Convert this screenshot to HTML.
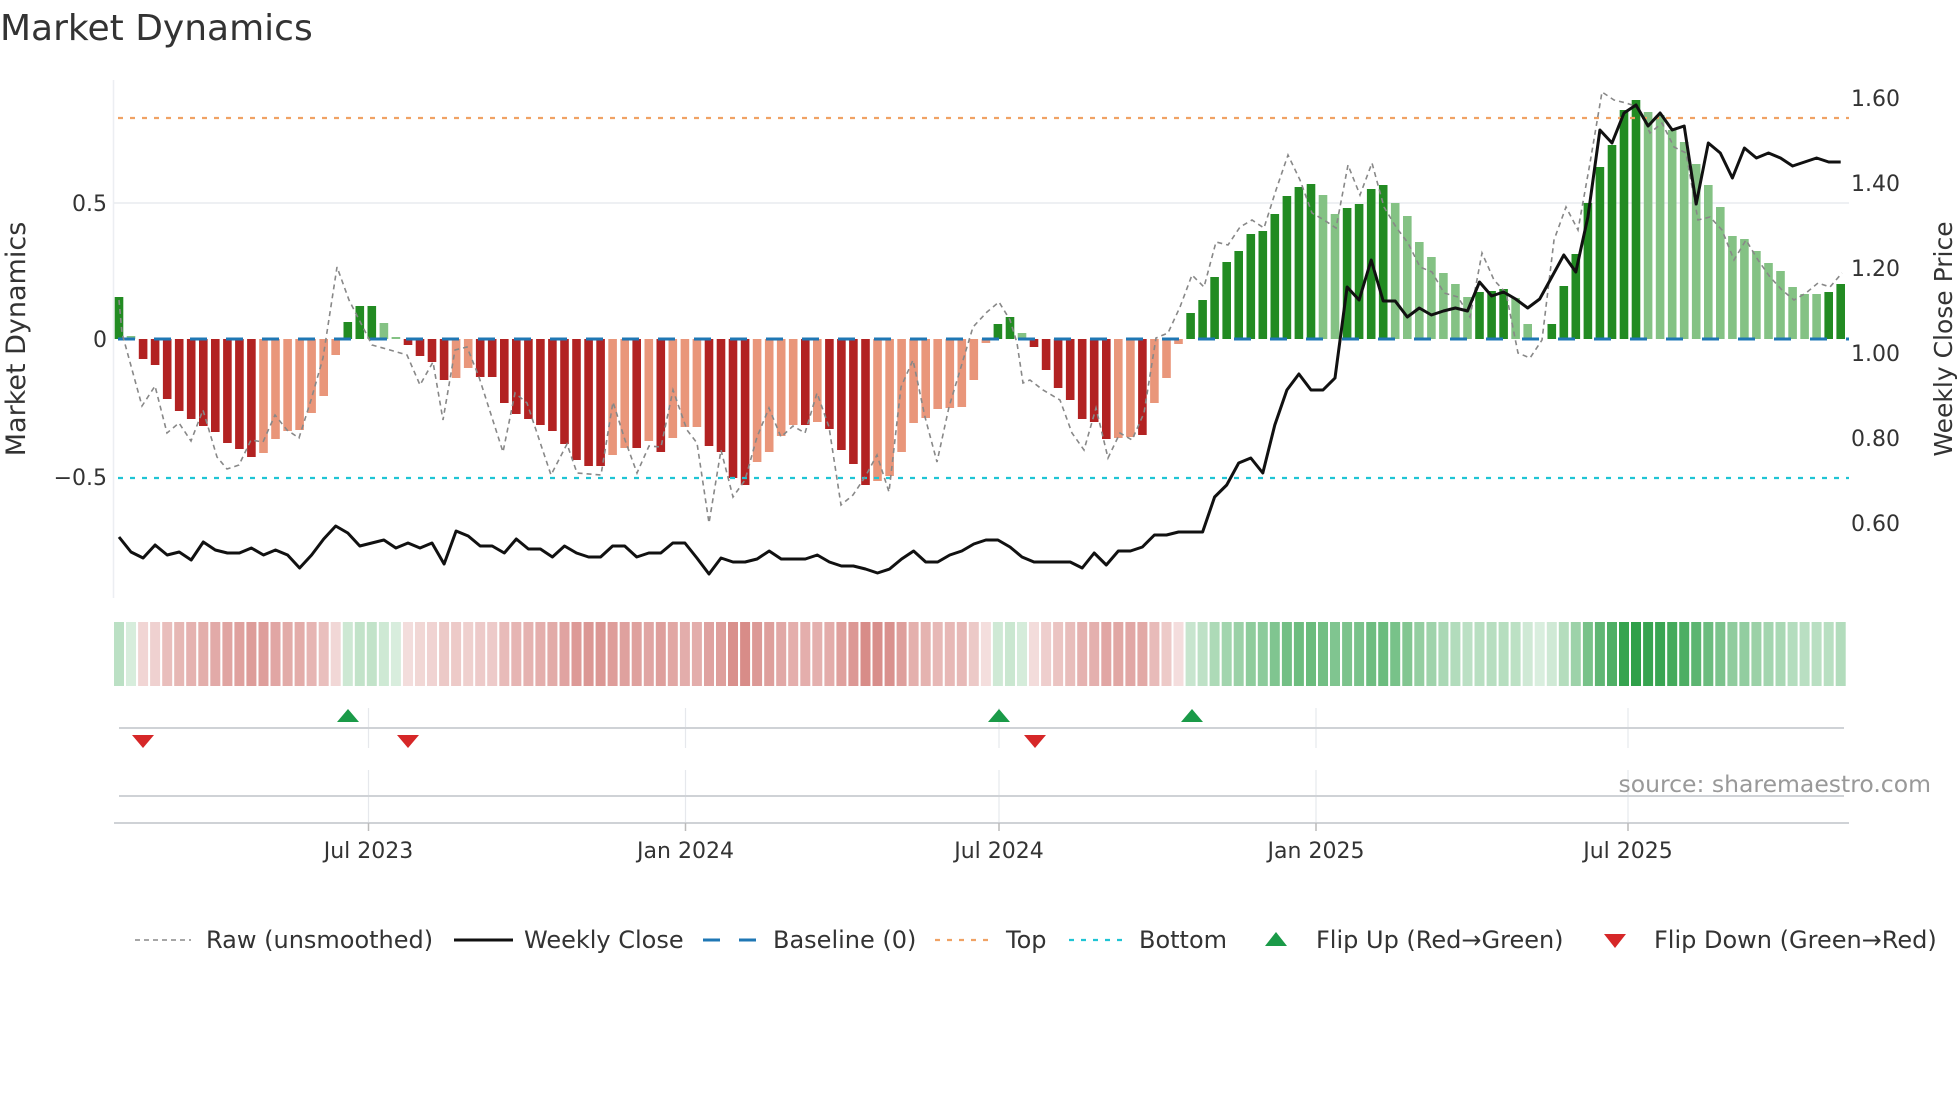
<!DOCTYPE html>
<html><head><meta charset="utf-8"><style>
html,body{margin:0;padding:0;background:#fff;}
svg{display:block;font-family:"DejaVu Sans","Liberation Sans",sans-serif;}
</style></head><body>
<svg id="s" width="1960" height="1102" viewBox="0 0 1960 1102" xmlns="http://www.w3.org/2000/svg">
<rect width="1960" height="1102" fill="#fff"/>
<text x="0" y="40" font-size="36" fill="#333">Market Dynamics</text>
<line x1="113.5" y1="80" x2="113.5" y2="598" stroke="#eceef2" stroke-width="1.5"/>
<line x1="114" y1="203" x2="1849" y2="203" stroke="#e8ebef" stroke-width="1.5"/>
<g id="bars"></g>
<line x1="118" y1="339" x2="1849" y2="339" stroke="#1f77b4" stroke-width="3" stroke-dasharray="17 19"/>
<line x1="118" y1="118" x2="1849" y2="118" stroke="#f0a264" stroke-width="2.2" stroke-dasharray="5 7"/>
<line x1="118" y1="478" x2="1849" y2="478" stroke="#1fc4d4" stroke-width="2.2" stroke-dasharray="5 7"/>
<polyline id="raw" fill="none" stroke="#888" stroke-width="1.6" stroke-dasharray="5 4"/>
<polyline id="close" fill="none" stroke="#111" stroke-width="3" stroke-linejoin="round"/>
<g font-size="22" fill="#333">
<text x="107" y="211" text-anchor="end">0.5</text>
<text x="107" y="347" text-anchor="end">0</text>
<text x="107" y="485" text-anchor="end">−0.5</text>
<text x="1851" y="106">1.60</text>
<text x="1851" y="191">1.40</text>
<text x="1851" y="276">1.20</text>
<text x="1851" y="361">1.00</text>
<text x="1851" y="446">0.80</text>
<text x="1851" y="531">0.60</text>
</g>
<text transform="translate(25,339) rotate(-90)" text-anchor="middle" font-size="27" fill="#333">Market Dynamics</text>
<text transform="translate(1952,339) rotate(-90)" text-anchor="middle" font-size="25" fill="#333">Weekly Close Price</text>
<g id="heat"></g>
<g stroke="#e6e8ec" stroke-width="1.2">
<line x1="368.5" y1="708" x2="368.5" y2="748"/><line x1="685.5" y1="708" x2="685.5" y2="748"/><line x1="999" y1="708" x2="999" y2="748"/><line x1="1316" y1="708" x2="1316" y2="748"/><line x1="1628" y1="708" x2="1628" y2="748"/>
<line x1="368.5" y1="770" x2="368.5" y2="823"/><line x1="685.5" y1="770" x2="685.5" y2="823"/><line x1="999" y1="770" x2="999" y2="823"/><line x1="1316" y1="770" x2="1316" y2="823"/><line x1="1628" y1="770" x2="1628" y2="823"/>
</g>
<g stroke="#cfd2d6" stroke-width="2">
<line x1="119" y1="728" x2="1844" y2="728"/>
<line x1="119" y1="796" x2="1844" y2="796"/>
<line x1="114" y1="823" x2="1849" y2="823"/>
</g>
<g stroke="#bbb" stroke-width="1.5">
<line x1="368.5" y1="823" x2="368.5" y2="831"/><line x1="685.5" y1="823" x2="685.5" y2="831"/><line x1="999" y1="823" x2="999" y2="831"/><line x1="1316" y1="823" x2="1316" y2="831"/><line x1="1628" y1="823" x2="1628" y2="831"/>
</g>
<g fill="#1a9a48">
<polygon points="337,722 359,722 348,709"/>
<polygon points="988,722 1010,722 999,709"/>
<polygon points="1181,722 1203,722 1192,709"/>
</g>
<g fill="#d62728">
<polygon points="132,735 154,735 143,748"/>
<polygon points="397,735 419,735 408,748"/>
<polygon points="1024,735 1046,735 1035,748"/>
</g>
<g font-size="22" fill="#333" text-anchor="middle">
<text x="368.5" y="858">Jul 2023</text>
<text x="685.5" y="858">Jan 2024</text>
<text x="999" y="858">Jul 2024</text>
<text x="1316" y="858">Jan 2025</text>
<text x="1628" y="858">Jul 2025</text>
</g>
<text x="1931" y="792" text-anchor="end" font-size="23.5" fill="#999">source: sharemaestro.com</text>
<g font-size="24" fill="#333">
<line x1="135" y1="940" x2="191" y2="940" stroke="#888" stroke-width="1.6" stroke-dasharray="5 4"/>
<text x="206" y="948">Raw (unsmoothed)</text>
<line x1="454" y1="940" x2="513" y2="940" stroke="#111" stroke-width="3"/>
<text x="524" y="948">Weekly Close</text>
<line x1="703" y1="940" x2="758" y2="940" stroke="#1f77b4" stroke-width="3" stroke-dasharray="17 19"/>
<text x="773" y="948">Baseline (0)</text>
<line x1="935" y1="940" x2="990" y2="940" stroke="#f0a264" stroke-width="2.2" stroke-dasharray="5 7"/>
<text x="1006" y="948">Top</text>
<line x1="1069" y1="940" x2="1124" y2="940" stroke="#1fc4d4" stroke-width="2.2" stroke-dasharray="5 7"/>
<text x="1139" y="948">Bottom</text>
<polygon points="1265,946 1287,946 1276,932" fill="#1a9a48"/>
<text x="1316" y="948">Flip Up (Red→Green)</text>
<polygon points="1604,934 1626,934 1615,948" fill="#d62728"/>
<text x="1654" y="948">Flip Down (Green→Red)</text>
</g>
</svg>
<script>
var H=[42,3,-20,-26,-60,-72,-80,-87,-93,-104,-110,-118,-114,-100,-92,-91,-74,-57,-16,17,33,33,16,2,-6,-17,-23,-41,-39,-29,-38,-38,-64,-75,-80,-86,-92,-105,-121,-127,-127,-116,-109,-109,-102,-113,-99,-88,-88,-107,-113,-139,-146,-123,-113,-97,-86,-86,-83,-90,-111,-125,-146,-142,-137,-113,-84,-79,-70,-69,-68,-41,-4,15,22,6,-8,-31,-49,-61,-80,-83,-100,-99,-98,-96,-64,-39,-5,26,39,62,77,88,105,108,125,143,152,155,144,125,131,135,150,154,136,123,97,82,66,55,42,47,48,50,41,15,0,15,53,85,136,172,194,229,239,227,224,209,197,175,154,132,103,100,88,76,68,52,45,45,47,55];
var light=function(i){var L=[1,12,13,14,15,16,17,18,22,23,28,29,41,42,44,46,47,48,53,54,55,56,58,63,64,65,66,67,68,69,70,71,72,75,83,84,86,87,88,100,101,106,107,108,109,110,111,112,116,117];if(L.indexOf(i)>=0)return true;if(i>=127&&i<=141)return true;return false;};
var C=[537,552,558,545,555,552,560,542,550,553,553,548,555,550,555,568,555,539,526,533,546,543,540,548,543,548,543,564,531,536,546,546,553,539,549,549,557,546,553,557,557,546,546,557,553,553,543,543,558,574,558,562,562,559,551,559,559,559,555,562,566,566,569,573,569,559,551,562,562,555,551,544,540,540,547,557,562,562,562,562,568,553,565,551,551,547,535,535,532,532,532,497,485,463,458,473,425,390,374,390,390,378,287,300,260,301,301,317,308,315,311,308,311,282,296,292,299,308,299,277,255,272,217,130,143,113,105,126,113,130,126,204,143,153,178,148,158,153,158,166,162,158,162,162];
var R=[119,300,122,333,142,406,155,386,167,433,179,423,191,441,203,410,217,457,227,469,239,465,251,440,263,442,275,415,287,430,299,438,311,400,323,358,337,267,349,300,372,345,390,350,407,355,420,385,433,362,443,420,455,350,467,347,479,377,503,452,515,393,527,403,551,475,567,444,577,473,601,475,613,402,625,440,637,473,649,446,661,447,673,390,687,430,697,443,709,523,721,450,733,497,745,480,757,437,769,408,781,437,793,426,805,433,817,393,829,427,841,505,853,495,865,477,877,455,889,492,901,387,913,360,925,417,937,462,949,407,961,367,973,327,987,312,999,302,1010,320,1017,343,1023,383,1030,380,1043,390,1060,400,1072,433,1084,450,1096,408,1108,458,1120,433,1132,440,1144,413,1156,338,1168,333,1180,307,1192,275,1204,287,1216,242,1228,245,1240,227,1252,220,1264,228,1276,190,1288,155,1300,180,1312,213,1324,220,1336,228,1348,165,1360,195,1372,163,1384,207,1396,227,1408,243,1420,267,1432,272,1444,293,1458,297,1470,317,1482,253,1494,280,1506,293,1518,353,1530,358,1542,340,1554,240,1566,207,1578,230,1590,163,1602,92,1614,100,1626,103,1638,107,1650,133,1662,123,1674,147,1686,153,1698,220,1710,217,1722,230,1734,260,1746,240,1758,260,1770,277,1782,290,1794,300,1806,293,1818,283,1830,287,1842,273];
var b="",h="",pts=[],rp=[];
function mix(c,t){return "rgb("+c.map(function(v){return Math.round(255-(255-v)*t)}).join(",")+")";}
for(var i=0;i<144;i++){var x=119+i*12.04,v=H[i],lt=light(i),col;
 if(v>=0)col=lt?"#84c284":"#228b22";else col=lt?"#e9967a":"#b22222";
 if(v!==0){var y=v>0?339-v:339,hh=Math.abs(v);b+='<rect x="'+(x-4.3).toFixed(1)+'" y="'+y+'" width="8.6" height="'+hh+'" fill="'+col+'"/>';}
 var t=Math.min(1,0.18+0.82*Math.abs(v)/240);
 var hc=v>=0?mix([46,160,72],t):mix([197,85,80],t);
 h+='<rect x="'+(x-5).toFixed(1)+'" y="622" width="10" height="64" fill="'+hc+'"/>';
 pts.push(x.toFixed(1)+","+C[i]);}
for(var k=0;k<R.length;k+=2)rp.push(R[k]+","+R[k+1]);
document.getElementById("bars").innerHTML=b;
document.getElementById("heat").innerHTML=h;
document.getElementById("close").setAttribute("points",pts.join(" "));
document.getElementById("raw").setAttribute("points",rp.join(" "));
</script>
</body></html>
